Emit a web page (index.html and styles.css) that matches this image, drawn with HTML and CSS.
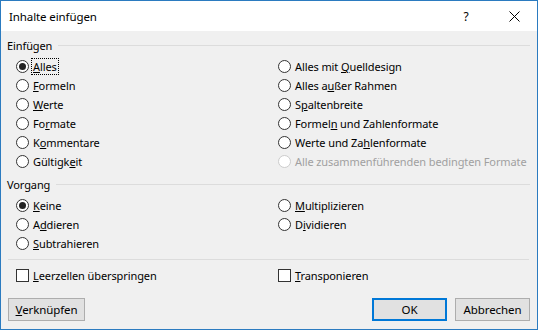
FILE: index.html
```html
<!DOCTYPE html>
<html lang="de">
<head>
  <meta charset="UTF-8">
  <title>Inhalte einfügen</title>
  <link rel="stylesheet" href="styles.css">
</head>
<body>

  <div class="dialog">
    <div class="titlebar">
      <span class="title">Inhalte einfügen</span>
      <span class="help">?</span>
      <span class="close">
        <svg width="11" height="11" viewBox="0 0 11 11"><path d="M0.5 0.5 L10.5 10.5 M10.5 0.5 L0.5 10.5" stroke="#000" stroke-width="1" fill="none"/></svg>
      </span>
    </div>

    <div class="content">
      <!-- Einfügen -->
      <div class="group-head"><span>Einfügen</span></div>
      <div class="options">
        <div class="radio checked"><span class="circle"></span><span class="text focus"><u>A</u>lles</span></div>
        <div class="radio"><span class="circle"></span><span class="text">Alles mit <u>Q</u>uelldesign</span></div>
        <div class="radio"><span class="circle"></span><span class="text"><u>F</u>ormeln</span></div>
        <div class="radio"><span class="circle"></span><span class="text">Alles a<u>u</u>ßer Rahmen</span></div>
        <div class="radio"><span class="circle"></span><span class="text"><u>W</u>erte</span></div>
        <div class="radio"><span class="circle"></span><span class="text">S<u>p</u>altenbreite</span></div>
        <div class="radio"><span class="circle"></span><span class="text">Fo<u>r</u>mate</span></div>
        <div class="radio"><span class="circle"></span><span class="text">Formel<u>n</u> und Zahlenformate</span></div>
        <div class="radio"><span class="circle"></span><span class="text">K<u>o</u>mmentare</span></div>
        <div class="radio"><span class="circle"></span><span class="text">Werte und Za<u>h</u>lenformate</span></div>
        <div class="radio"><span class="circle"></span><span class="text">Gültigk<u>e</u>it</span></div>
        <div class="radio disabled"><span class="circle"></span><span class="text">Alle zusammenführenden bedingten Formate</span></div>
      </div>

      <!-- Vorgang -->
      <div class="group-head vorgang"><span>Vorgang</span></div>
      <div class="options">
        <div class="radio checked"><span class="circle"></span><span class="text"><u>K</u>eine</span></div>
        <div class="radio"><span class="circle"></span><span class="text"><u>M</u>ultiplizieren</span></div>
        <div class="radio"><span class="circle"></span><span class="text">A<u>d</u>dieren</span></div>
        <div class="radio"><span class="circle"></span><span class="text">D<u>i</u>vidieren</span></div>
        <div class="radio"><span class="circle"></span><span class="text"><u>S</u>ubtrahieren</span></div>
      </div>

      <div class="separator"></div>

      <div class="checks">
        <div class="check"><span class="box"></span><span class="text"><u>L</u>eerzellen überspringen</span></div>
        <div class="check"><span class="box"></span><span class="text"><u>T</u>ransponieren</span></div>
      </div>

      <div class="buttons">
        <button class="btn"><u>V</u>erknüpfen</button>
        <span class="spacer"></span>
        <button class="btn default">OK</button>
        <button class="btn">Abbrechen</button>
      </div>
    </div>
  </div>

</body>
</html>
```

FILE: styles.css
```css
body {
  margin: 0;
  font-family: 'Noto Sans', 'Open Sans', sans-serif;
  font-size: 11px;
  letter-spacing: -0.1px;
  color: #000;
}

.dialog {
  width: 538px;
  height: 330px;
  box-sizing: border-box;
  border: 1px solid #2b7bc0;
  background-color: #f0f0f0;
  display: flex;
  flex-direction: column;
}

.titlebar {
  height: 30px;
  background-color: #fff;
  display: flex;
  align-items: center;
}

.title {
  flex: 1;
  padding-left: 8px;
  font-size: 11.5px;
}

.help {
  width: 50px;
  text-align: center;
  font-size: 12px;
}

.close {
  width: 46px;
  height: 30px;
  display: flex;
  align-items: center;
  justify-content: center;
}

.content {
  flex: 1;
  padding: 6px 7px 8px 6px;
  display: flex;
  flex-direction: column;
}

.group-head {
  display: flex;
  align-items: center;
  height: 16px;
}

.group-head::after {
  content: "";
  flex: 1;
  height: 1px;
  background-color: #dcdcdc;
  margin-left: 6px;
}

.group-head.vorgang {
  margin-top: 5px;
}

.options {
  display: grid;
  grid-template-columns: 262px 1fr;
  grid-auto-rows: 19px;
  padding-left: 9px;
  margin-top: 4px;
}

.radio, .check {
  display: flex;
  align-items: center;
  white-space: nowrap;
}

.circle {
  width: 11px;
  height: 11px;
  border: 1px solid #333;
  border-radius: 50%;
  background-color: #fff;
  margin-right: 4px;
  position: relative;
  flex-shrink: 0;
}

.radio.checked .circle::after {
  content: "";
  position: absolute;
  left: 2px;
  top: 2px;
  width: 7px;
  height: 7px;
  border-radius: 50%;
  background-color: #222;
}

.radio.disabled .circle {
  border-color: #cccccc;
}

.radio.disabled .text {
  color: #a0a0a0;
}

.text.focus {
  outline: 1px dotted #000;
  outline-offset: 0;
  padding: 0 1px;
  margin-left: -1px;
}

.separator {
  height: 1px;
  background-color: #dcdcdc;
  margin: 6px 1px 0 1px;
}

.checks {
  display: grid;
  grid-template-columns: 262px 1fr;
  padding-left: 9px;
  height: 19px;
  margin-top: 6px;
}

.box {
  width: 11px;
  height: 11px;
  border: 1px solid #333;
  background-color: #fff;
  margin-right: 4px;
}

.buttons {
  display: flex;
  margin-top: auto;
  gap: 8px;
  padding-left: 1px;
}

.spacer {
  flex: 1;
}

.btn {
  font-family: inherit;
  font-size: 11.5px;
  letter-spacing: -0.1px;
  color: #000;
  width: 75px;
  height: 23px;
  padding: 0;
  background-color: #e1e1e1;
  border: 1px solid #adadad;
}

.btn:first-child {
  width: 77px;
}

.btn.default {
  border: 2px solid #0078d7;
}
```
